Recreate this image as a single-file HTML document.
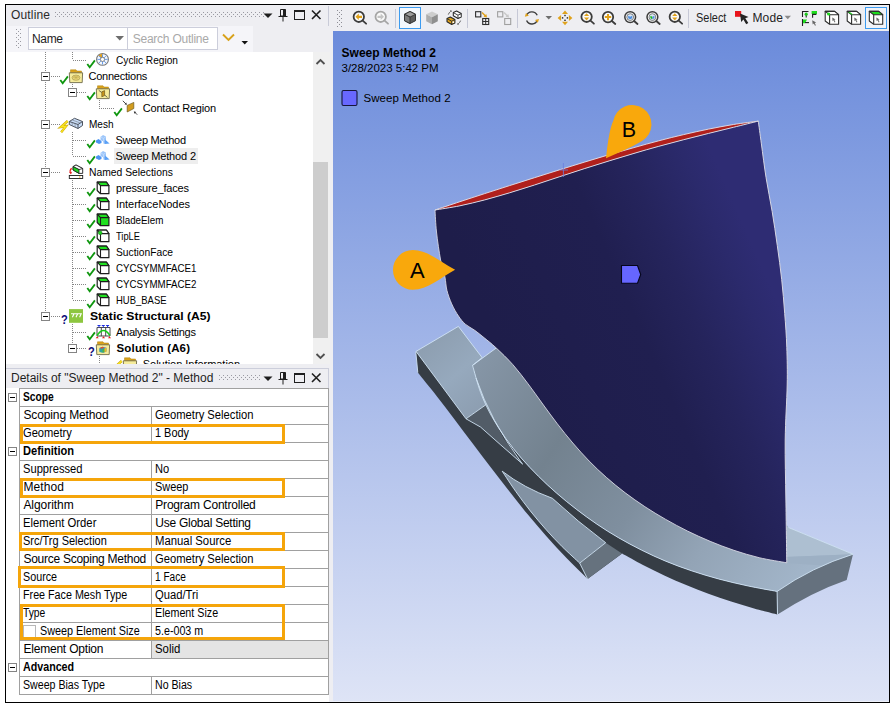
<!DOCTYPE html>
<html><head><meta charset="utf-8"><title>Mechanical</title>
<style>
html,body{margin:0;padding:0;background:#fff;}
body{width:895px;height:708px;position:relative;overflow:hidden;font-family:"Liberation Sans",sans-serif;}
.a{position:absolute;}
.t{position:absolute;white-space:nowrap;font-family:"Liberation Sans",sans-serif;}
svg{position:absolute;overflow:visible;}
</style></head><body>

<div class="a" style="left:5px;top:4px;width:885px;height:699px;background:#000;"></div>
<div class="a" style="left:6px;top:5px;width:883px;height:697px;background:#EEEEF2;"></div>
<span class="t" style="left:11.0px;top:7.0px;line-height:16px;font-size:12px;color:#2A2A2A;letter-spacing:0.163px;">Outline</span>
<div class="a" style="left:55px;top:12px;width:209px;height:5px;background-image:radial-gradient(circle at 0.5px 0.5px,#9a9aa2 0.6px,transparent 0.7px),radial-gradient(circle at 0.5px 0.5px,#9a9aa2 0.6px,transparent 0.7px);background-size:4px 4px,4px 4px;background-position:0 0,2px 2px;"></div>
<svg style="left:262px;top:7px" width="12" height="16"><path d="M1.5 6.5 L10.5 6.5 L6 11 Z" fill="#1E1E1E"/></svg><svg style="left:277px;top:7px" width="12" height="16"><path d="M3.5 2.5h5v6.5h-5z M6.5 2.5v6.5" fill="none" stroke="#1E1E1E" stroke-width="1"/><path d="M7 2.5h1.5v6.5h-1.5z" fill="#1E1E1E"/><path d="M1.5 9.5h9" stroke="#1E1E1E" stroke-width="1"/><path d="M6 9.5v5" stroke="#1E1E1E" stroke-width="1"/></svg><svg style="left:293px;top:7px" width="14" height="16"><rect x="1.5" y="3.5" width="10" height="9" fill="none" stroke="#1E1E1E" stroke-width="1"/><rect x="1" y="3" width="11" height="2" fill="#1E1E1E"/></svg><svg style="left:310px;top:7px" width="14" height="16"><path d="M2 3.5 L10.5 12 M10.5 3.5 L2 12" stroke="#1E1E1E" stroke-width="1.6" fill="none"/></svg>
<div class="a" style="left:328px;top:6px;width:1px;height:20px;background:#C9CBD8;"></div>
<div class="a" style="left:6px;top:26px;width:247px;height:26px;background:#F5F5F9;"></div>
<div class="a" style="left:16px;top:29px;width:5px;height:19px;background-image:radial-gradient(circle at 0.5px 0.5px,#9a9aa2 0.6px,transparent 0.7px),radial-gradient(circle at 0.5px 0.5px,#9a9aa2 0.6px,transparent 0.7px);background-size:4px 4px,4px 4px;background-position:0 0,2px 2px;"></div>
<div class="a" style="left:28px;top:27px;width:98px;height:21px;background:#fff;border:1px solid #CCCEDB;"></div>
<span class="t" style="left:32.0px;top:30.5px;line-height:16px;font-size:12px;color:#1E1E1E;letter-spacing:-0.337px;">Name</span>
<svg style="left:115px;top:34px" width="10" height="8"><path d="M0.5 2 L9 2 L4.75 6.5 Z" fill="#6d6d6d"/></svg>
<div class="a" style="left:127px;top:27px;width:89px;height:21px;background:#fff;border:1px solid #CCCEDB;"></div>
<span class="t" style="left:132.7px;top:30.5px;line-height:16px;font-size:12px;color:#A9A9A9;letter-spacing:-0.237px;">Search Outline</span>
<svg style="left:222px;top:32px" width="14" height="12"><path d="M1 2.5 L6.5 8 L12 2.5" stroke="#D8A21B" stroke-width="1.9" fill="none"/></svg>
<svg style="left:241px;top:40px" width="8" height="6"><path d="M0.5 1 L7 1 L3.75 4.5 Z" fill="#111"/></svg>
<div class="a" style="left:6px;top:52px;width:307px;height:312px;background:#fff;overflow:hidden;" id="tree">
<div class="a" style="left:39px;top:0px;width:1px;height:264px;background-image:linear-gradient(#858585 50%,transparent 50%);background-size:1px 2px;background-position:0 0px;"></div>
<div class="a" style="left:66px;top:0px;width:1px;height:8px;background-image:linear-gradient(#858585 50%,transparent 50%);background-size:1px 2px;background-position:0 0px;"></div>
<div class="a" style="left:66px;top:32px;width:1px;height:4px;background-image:linear-gradient(#858585 50%,transparent 50%);background-size:1px 2px;background-position:0 0px;"></div>
<div class="a" style="left:93px;top:48px;width:1px;height:8px;background-image:linear-gradient(#858585 50%,transparent 50%);background-size:1px 2px;background-position:0 0px;"></div>
<div class="a" style="left:66px;top:80px;width:1px;height:24px;background-image:linear-gradient(#858585 50%,transparent 50%);background-size:1px 2px;background-position:0 0px;"></div>
<div class="a" style="left:66px;top:128px;width:1px;height:120px;background-image:linear-gradient(#858585 50%,transparent 50%);background-size:1px 2px;background-position:0 0px;"></div>
<div class="a" style="left:66px;top:272px;width:1px;height:20px;background-image:linear-gradient(#858585 50%,transparent 50%);background-size:1px 2px;background-position:0 0px;"></div>
<div class="a" style="left:93px;top:304px;width:1px;height:10px;background-image:linear-gradient(#858585 50%,transparent 50%);background-size:1px 2px;background-position:0 0px;"></div>
<div class="a" style="left:66px;top:8px;width:15px;height:1px;background-image:linear-gradient(90deg,#858585 50%,transparent 50%);background-size:2px 1px;background-position:1px 0;"></div>
<svg style="left:81px;top:8px" width="9" height="9" viewBox="0 0 9 9"><path d="M0.3 3.9 L2.7 7.3 L7.9 0.4" stroke="#0E960E" stroke-width="1.8" fill="none"/></svg>
<svg style="left:89px;top:0px" width="16" height="16" viewBox="0 0 16 16"><circle cx="7.5" cy="7.4" r="5.9" fill="#F4F8FE" stroke="#777" stroke-width="1.1"/><path d="M7.5 7.4 L3.4 3.6 A5.6 5.6 0 0 1 7.5 1.8 Z" fill="#E0A020"/><path d="M7.5 2.3V12.5M2.4 7.4H12.6M3.9 3.8L11.1 11M11.1 3.8L3.9 11" stroke="#5B93E6" stroke-width="0.9"/><circle cx="7.5" cy="7.4" r="2.1" fill="#fff" stroke="#777" stroke-width="0.9"/></svg>
<div class="a" style="left:-6px;top:-52px;"><span class="t" style="left:116.0px;top:52.0px;line-height:16px;font-size:11px;color:#000;transform:scaleX(0.9220);transform-origin:0 50%;">Cyclic Region</span></div>
<div class="a" style="left:44px;top:24px;width:10px;height:1px;background-image:linear-gradient(90deg,#858585 50%,transparent 50%);background-size:2px 1px;background-position:1px 0;"></div>
<div class="a" style="left:35px;top:20px;width:7px;height:7px;border:1px solid #848484;background:#fff;"></div><div class="a" style="left:37px;top:24px;width:5px;height:1px;background:#000;"></div>
<svg style="left:54px;top:24px" width="9" height="9" viewBox="0 0 9 9"><path d="M0.3 3.9 L2.7 7.3 L7.9 0.4" stroke="#0E960E" stroke-width="1.8" fill="none"/></svg>
<svg style="left:62px;top:16px" width="16" height="16" viewBox="0 0 16 16"><path d="M2.5 1.8 H8 L9 3 H13.5 V5.5 H2.5 Z" fill="#D9A21B" stroke="#B0820E" stroke-width="0.5"/><path d="M1.3 4.8 H14.6 L14.2 14.6 H1.8 Z" fill="#F6EC9C" stroke="#6E6A4A" stroke-width="0.9" stroke-linejoin="round"/><ellipse cx="8" cy="9.7" rx="4" ry="2.6" fill="#EAD778" stroke="#A89A50" stroke-width="0.7"/><path d="M5 9.2h6M6.5 8l3 3.2M9.5 8l-3 3.2" stroke="#B8A24A" stroke-width="0.6"/></svg>
<div class="a" style="left:-6px;top:-52px;"><span class="t" style="left:88.5px;top:68.0px;line-height:16px;font-size:11px;color:#000;letter-spacing:-0.235px;">Connections</span></div>
<div class="a" style="left:71px;top:40px;width:10px;height:1px;background-image:linear-gradient(90deg,#858585 50%,transparent 50%);background-size:2px 1px;background-position:0px 0;"></div>
<div class="a" style="left:62px;top:36px;width:7px;height:7px;border:1px solid #848484;background:#fff;"></div><div class="a" style="left:64px;top:40px;width:5px;height:1px;background:#000;"></div>
<svg style="left:81px;top:40px" width="9" height="9" viewBox="0 0 9 9"><path d="M0.3 3.9 L2.7 7.3 L7.9 0.4" stroke="#0E960E" stroke-width="1.8" fill="none"/></svg>
<svg style="left:89px;top:32px" width="16" height="16" viewBox="0 0 16 16"><path d="M2.5 1.8 H8 L9 3 H13.5 V5.5 H2.5 Z" fill="#D9A21B" stroke="#B0820E" stroke-width="0.5"/><path d="M1.3 4.8 H14.6 L14.2 14.6 H1.8 Z" fill="#F6EC9C" stroke="#6E6A4A" stroke-width="0.9" stroke-linejoin="round"/><path d="M6.8 7.8 L9.6 6.6 L9.6 11.6 L6.8 12.8 Z" fill="#C9961C" stroke="#5a4a18" stroke-width="0.6"/><path d="M3.8 6.4 L6.6 8.4 M12.4 13.4 L9.8 11.2" stroke="#4a4a3a" stroke-width="0.8"/></svg>
<div class="a" style="left:-6px;top:-52px;"><span class="t" style="left:116.0px;top:84.0px;line-height:16px;font-size:11px;color:#000;letter-spacing:-0.130px;">Contacts</span></div>
<div class="a" style="left:93px;top:56px;width:15px;height:1px;background-image:linear-gradient(90deg,#858585 50%,transparent 50%);background-size:2px 1px;background-position:0px 0;"></div>
<svg style="left:108px;top:56px" width="9" height="9" viewBox="0 0 9 9"><path d="M0.3 3.9 L2.7 7.3 L7.9 0.4" stroke="#0E960E" stroke-width="1.8" fill="none"/></svg>
<svg style="left:116px;top:48px" width="16" height="16" viewBox="0 0 16 16"><path d="M5.200 5.400 L11.800 2.400 L11.800 8.500 L5.200 12 Z" fill="#D29C1E" stroke="#6E5A1E" stroke-width="0.700"/><path d="M0.800 0.800 L4 4" stroke="#333" stroke-width="0.900"/><path d="M4.900 4.900 L2.500 4.300 L4.300 2.500 Z" fill="#333"/><path d="M15.200 14.700 L12.600 12.100" stroke="#333" stroke-width="0.900"/><path d="M11.800 11.300 L14.200 11.900 L12.400 13.700 Z" fill="#333"/></svg>
<div class="a" style="left:-6px;top:-52px;"><span class="t" style="left:142.8px;top:100.0px;line-height:16px;font-size:11px;color:#000;letter-spacing:-0.202px;">Contact Region</span></div>
<div class="a" style="left:44px;top:72px;width:10px;height:1px;background-image:linear-gradient(90deg,#858585 50%,transparent 50%);background-size:2px 1px;background-position:1px 0;"></div>
<div class="a" style="left:35px;top:68px;width:7px;height:7px;border:1px solid #848484;background:#fff;"></div><div class="a" style="left:37px;top:72px;width:5px;height:1px;background:#000;"></div>
<svg style="left:53px;top:68px" width="10" height="14" viewBox="0 0 10 14"><path d="M8.7 1 L2 7 L7 6.2 L2.2 12.2" stroke="#C9A50C" stroke-width="2.4" fill="none" stroke-linejoin="miter"/><path d="M8.7 1 L2 7 L7 6.2 L2.2 12.2" stroke="#FAE51E" stroke-width="1.4" fill="none"/></svg>
<svg style="left:62px;top:64px" width="16" height="16" viewBox="0 0 16 16"><path d="M1.300 5.500 L6.500 2.300 L14.500 5.500 L14.500 9.500 L10 12.500 L1.300 8.500 Z" fill="#C9DDF7" stroke="#4E5560" stroke-width="1" stroke-linejoin="round"/><path d="M1.300 5.500 L10 8.500 L14.500 5.500 M10 8.500 V12.500" stroke="#4E5560" stroke-width="1" fill="none"/><path d="M4.200 6.500 V9.800 M7.100 7.500 V11.200 M4 3.900 L12.300 7" stroke="#7D8794" stroke-width="0.700" fill="none"/></svg>
<div class="a" style="left:-6px;top:-52px;"><span class="t" style="left:88.5px;top:116.0px;line-height:16px;font-size:11px;color:#000;transform:scaleX(0.9108);transform-origin:0 50%;">Mesh</span></div>
<div class="a" style="left:66px;top:88px;width:15px;height:1px;background-image:linear-gradient(90deg,#858585 50%,transparent 50%);background-size:2px 1px;background-position:1px 0;"></div>
<svg style="left:81px;top:88px" width="9" height="9" viewBox="0 0 9 9"><path d="M0.3 3.9 L2.7 7.3 L7.9 0.4" stroke="#0E960E" stroke-width="1.8" fill="none"/></svg>
<svg style="left:89px;top:80px" width="16" height="16" viewBox="0 0 16 16"><path d="M5.500 5 L8 3 L11 4.500 L11 8 L8.500 9.500 L5.500 8 Z" fill="#9DC6FA"/><path d="M5.500 5 L8.500 6.400 L11 4.500 M8.500 6.400 V9.500" stroke="#C9E0FC" stroke-width="0.700" fill="none"/><path d="M1 8.500 L3.500 7 L6.500 9 L6.500 11 L4 12 L1 10.500 Z" fill="#4C94F2"/><path d="M10 7.500 L14.600 11.500 L10 12 Z" fill="#5BA1F6"/><path d="M8.500 9.500 L10 8 L10 12 L8.500 11.500 Z" fill="#86B8F8"/></svg>
<div class="a" style="left:-6px;top:-52px;"><span class="t" style="left:115.5px;top:132.0px;line-height:16px;font-size:11px;color:#000;letter-spacing:-0.262px;">Sweep Method</span></div>
<div class="a" style="left:66px;top:104px;width:15px;height:1px;background-image:linear-gradient(90deg,#858585 50%,transparent 50%);background-size:2px 1px;background-position:1px 0;"></div>
<svg style="left:81px;top:104px" width="9" height="9" viewBox="0 0 9 9"><path d="M0.3 3.9 L2.7 7.3 L7.9 0.4" stroke="#0E960E" stroke-width="1.8" fill="none"/></svg>
<svg style="left:89px;top:96px" width="16" height="16" viewBox="0 0 16 16"><path d="M5.500 5 L8 3 L11 4.500 L11 8 L8.500 9.500 L5.500 8 Z" fill="#9DC6FA"/><path d="M5.500 5 L8.500 6.400 L11 4.500 M8.500 6.400 V9.500" stroke="#C9E0FC" stroke-width="0.700" fill="none"/><path d="M1 8.500 L3.500 7 L6.500 9 L6.500 11 L4 12 L1 10.500 Z" fill="#4C94F2"/><path d="M10 7.500 L14.600 11.500 L10 12 Z" fill="#5BA1F6"/><path d="M8.500 9.500 L10 8 L10 12 L8.500 11.500 Z" fill="#86B8F8"/></svg>
<div class="a" style="left:108px;top:96px;width:84px;height:16px;background:#EEEEEE;"></div>
<div class="a" style="left:-6px;top:-52px;"><span class="t" style="left:115.5px;top:148.0px;line-height:16px;font-size:11px;color:#000;letter-spacing:-0.158px;">Sweep Method 2</span></div>
<div class="a" style="left:44px;top:120px;width:10px;height:1px;background-image:linear-gradient(90deg,#858585 50%,transparent 50%);background-size:2px 1px;background-position:1px 0;"></div>
<div class="a" style="left:35px;top:116px;width:7px;height:7px;border:1px solid #848484;background:#fff;"></div><div class="a" style="left:37px;top:120px;width:5px;height:1px;background:#000;"></div>
<svg style="left:62px;top:112px" width="16" height="16" viewBox="0 0 16 16"><path d="M5.100 2.600 L8 1 L14.700 4.500 V9.400 H11 L5.100 6 Z" fill="#fff" stroke="#1E1E1E" stroke-width="0.900" stroke-linejoin="round"/><path d="M5.100 2.600 L8 1 L14.700 4.500 L11 5.600 Z" fill="#fff" stroke="#1E1E1E" stroke-width="0.800"/><path d="M5.100 2.600 L11 5.600 V9.400 L5.100 6 Z" fill="#1FD21F" stroke="#1E1E1E" stroke-width="0.800"/><path d="M3.600 4.200 Q1.200 6.500 2.600 9.200" stroke="#E62020" stroke-width="1.200" fill="none"/><path d="M1.200 8.200 L3 10.400 L4 7.800 Z" fill="#E62020"/><rect x="1.300" y="11.500" width="13.400" height="3" fill="#fff" stroke="#1E1E1E" stroke-width="0.900"/><rect x="11" y="12.500" width="1.500" height="1" fill="#E8A317"/></svg>
<div class="a" style="left:-6px;top:-52px;"><span class="t" style="left:88.5px;top:164.0px;line-height:16px;font-size:11px;color:#000;transform:scaleX(0.9388);transform-origin:0 50%;">Named Selections</span></div>
<div class="a" style="left:66px;top:136px;width:15px;height:1px;background-image:linear-gradient(90deg,#858585 50%,transparent 50%);background-size:2px 1px;background-position:1px 0;"></div>
<svg style="left:81px;top:136px" width="9" height="9" viewBox="0 0 9 9"><path d="M0.3 3.9 L2.7 7.3 L7.9 0.4" stroke="#0E960E" stroke-width="1.8" fill="none"/></svg>
<svg style="left:89px;top:128px" width="16" height="16" viewBox="0 0 16 16"><path d="M2.200 2.100 H11.400 L13.900 5.600 V13.700 H5.500 L2.200 10.500 Z" fill="#fff" stroke="#1E1E1E" stroke-width="1.200" stroke-linejoin="round"/><path d="M2.200 2.100 H11.400 L13.900 5.600 H5.500 Z" fill="#1FE01F" stroke="#1E1E1E" stroke-width="1.100" stroke-linejoin="round"/><path d="M5.500 5.600 V13.700" stroke="#1E1E1E" stroke-width="1.100"/></svg>
<div class="a" style="left:-6px;top:-52px;"><span class="t" style="left:116.0px;top:180.0px;line-height:16px;font-size:11px;color:#000;letter-spacing:-0.170px;">pressure_faces</span></div>
<div class="a" style="left:66px;top:152px;width:15px;height:1px;background-image:linear-gradient(90deg,#858585 50%,transparent 50%);background-size:2px 1px;background-position:1px 0;"></div>
<svg style="left:81px;top:152px" width="9" height="9" viewBox="0 0 9 9"><path d="M0.3 3.9 L2.7 7.3 L7.9 0.4" stroke="#0E960E" stroke-width="1.8" fill="none"/></svg>
<svg style="left:89px;top:144px" width="16" height="16" viewBox="0 0 16 16"><path d="M2.200 2.100 H11.400 L13.900 5.600 V13.700 H5.500 L2.200 10.500 Z" fill="#fff" stroke="#1E1E1E" stroke-width="1.200" stroke-linejoin="round"/><path d="M2.200 2.100 H11.400 L13.900 5.600 H5.500 Z" fill="#1FE01F" stroke="#1E1E1E" stroke-width="1.100" stroke-linejoin="round"/><path d="M5.500 5.600 V13.700" stroke="#1E1E1E" stroke-width="1.100"/></svg>
<div class="a" style="left:-6px;top:-52px;"><span class="t" style="left:116.0px;top:196.0px;line-height:16px;font-size:11px;color:#000;letter-spacing:-0.046px;">InterfaceNodes</span></div>
<div class="a" style="left:66px;top:168px;width:15px;height:1px;background-image:linear-gradient(90deg,#858585 50%,transparent 50%);background-size:2px 1px;background-position:1px 0;"></div>
<svg style="left:81px;top:168px" width="9" height="9" viewBox="0 0 9 9"><path d="M0.3 3.9 L2.7 7.3 L7.9 0.4" stroke="#0E960E" stroke-width="1.8" fill="none"/></svg>
<svg style="left:89px;top:160px" width="16" height="16" viewBox="0 0 16 16"><path d="M2.200 2.100 H11.400 L13.900 5.600 V13.700 H5.500 L2.200 10.500 Z" fill="#1FE01F" stroke="#1E1E1E" stroke-width="1.200" stroke-linejoin="round"/><path d="M2.200 2.100 H11.400 L13.900 5.600 H5.500 Z" fill="#1FE01F" stroke="#1E1E1E" stroke-width="1.100" stroke-linejoin="round"/><path d="M5.500 5.600 V13.700" stroke="#1E1E1E" stroke-width="1.100"/></svg>
<div class="a" style="left:-6px;top:-52px;"><span class="t" style="left:116.0px;top:212.0px;line-height:16px;font-size:11px;color:#000;transform:scaleX(0.8911);transform-origin:0 50%;">BladeElem</span></div>
<div class="a" style="left:66px;top:184px;width:15px;height:1px;background-image:linear-gradient(90deg,#858585 50%,transparent 50%);background-size:2px 1px;background-position:1px 0;"></div>
<svg style="left:81px;top:184px" width="9" height="9" viewBox="0 0 9 9"><path d="M0.3 3.9 L2.7 7.3 L7.9 0.4" stroke="#0E960E" stroke-width="1.8" fill="none"/></svg>
<svg style="left:89px;top:176px" width="16" height="16" viewBox="0 0 16 16"><path d="M2.200 2.100 H11.400 L13.900 5.600 V13.700 H5.500 L2.200 10.500 Z" fill="#fff" stroke="#1E1E1E" stroke-width="1.200" stroke-linejoin="round"/><path d="M2.200 2.100 H11.400 L13.900 5.600 H5.500 Z" fill="#fff" stroke="#1E1E1E" stroke-width="1.100" stroke-linejoin="round"/><path d="M5.500 5.600 V13.700" stroke="#1E1E1E" stroke-width="1.100"/><circle cx="5.200" cy="4.800" r="1.900" fill="#1FD21F" stroke="#127a12" stroke-width="0.500"/></svg>
<div class="a" style="left:-6px;top:-52px;"><span class="t" style="left:116.0px;top:228.0px;line-height:16px;font-size:11px;color:#000;transform:scaleX(0.8472);transform-origin:0 50%;">TipLE</span></div>
<div class="a" style="left:66px;top:200px;width:15px;height:1px;background-image:linear-gradient(90deg,#858585 50%,transparent 50%);background-size:2px 1px;background-position:1px 0;"></div>
<svg style="left:81px;top:200px" width="9" height="9" viewBox="0 0 9 9"><path d="M0.3 3.9 L2.7 7.3 L7.9 0.4" stroke="#0E960E" stroke-width="1.8" fill="none"/></svg>
<svg style="left:89px;top:192px" width="16" height="16" viewBox="0 0 16 16"><path d="M2.200 2.100 H11.400 L13.900 5.600 V13.700 H5.500 L2.200 10.500 Z" fill="#fff" stroke="#1E1E1E" stroke-width="1.200" stroke-linejoin="round"/><path d="M2.200 2.100 H11.400 L13.900 5.600 H5.500 Z" fill="#1FE01F" stroke="#1E1E1E" stroke-width="1.100" stroke-linejoin="round"/><path d="M5.500 5.600 V13.700" stroke="#1E1E1E" stroke-width="1.100"/></svg>
<div class="a" style="left:-6px;top:-52px;"><span class="t" style="left:116.0px;top:244.0px;line-height:16px;font-size:11px;color:#000;transform:scaleX(0.9322);transform-origin:0 50%;">SuctionFace</span></div>
<div class="a" style="left:66px;top:216px;width:15px;height:1px;background-image:linear-gradient(90deg,#858585 50%,transparent 50%);background-size:2px 1px;background-position:1px 0;"></div>
<svg style="left:81px;top:216px" width="9" height="9" viewBox="0 0 9 9"><path d="M0.3 3.9 L2.7 7.3 L7.9 0.4" stroke="#0E960E" stroke-width="1.8" fill="none"/></svg>
<svg style="left:89px;top:208px" width="16" height="16" viewBox="0 0 16 16"><path d="M2.200 2.100 H11.400 L13.900 5.600 V13.700 H5.500 L2.200 10.500 Z" fill="#fff" stroke="#1E1E1E" stroke-width="1.200" stroke-linejoin="round"/><path d="M2.200 2.100 H11.400 L13.900 5.600 H5.500 Z" fill="#1FE01F" stroke="#1E1E1E" stroke-width="1.100" stroke-linejoin="round"/><path d="M5.500 5.600 V13.700" stroke="#1E1E1E" stroke-width="1.100"/></svg>
<div class="a" style="left:-6px;top:-52px;"><span class="t" style="left:115.5px;top:260.0px;line-height:16px;font-size:11px;color:#000;transform:scaleX(0.8839);transform-origin:0 50%;">CYCSYMMFACE1</span></div>
<div class="a" style="left:66px;top:232px;width:15px;height:1px;background-image:linear-gradient(90deg,#858585 50%,transparent 50%);background-size:2px 1px;background-position:1px 0;"></div>
<svg style="left:81px;top:232px" width="9" height="9" viewBox="0 0 9 9"><path d="M0.3 3.9 L2.7 7.3 L7.9 0.4" stroke="#0E960E" stroke-width="1.8" fill="none"/></svg>
<svg style="left:89px;top:224px" width="16" height="16" viewBox="0 0 16 16"><path d="M2.200 2.100 H11.400 L13.900 5.600 V13.700 H5.500 L2.200 10.500 Z" fill="#fff" stroke="#1E1E1E" stroke-width="1.200" stroke-linejoin="round"/><path d="M2.200 2.100 H11.400 L13.900 5.600 H5.500 Z" fill="#1FE01F" stroke="#1E1E1E" stroke-width="1.100" stroke-linejoin="round"/><path d="M5.500 5.600 V13.700" stroke="#1E1E1E" stroke-width="1.100"/></svg>
<div class="a" style="left:-6px;top:-52px;"><span class="t" style="left:115.5px;top:276.0px;line-height:16px;font-size:11px;color:#000;transform:scaleX(0.8839);transform-origin:0 50%;">CYCSYMMFACE2</span></div>
<div class="a" style="left:66px;top:248px;width:15px;height:1px;background-image:linear-gradient(90deg,#858585 50%,transparent 50%);background-size:2px 1px;background-position:1px 0;"></div>
<svg style="left:81px;top:248px" width="9" height="9" viewBox="0 0 9 9"><path d="M0.3 3.9 L2.7 7.3 L7.9 0.4" stroke="#0E960E" stroke-width="1.8" fill="none"/></svg>
<svg style="left:89px;top:240px" width="16" height="16" viewBox="0 0 16 16"><path d="M2.200 2.100 H11.400 L13.900 5.600 V13.700 H5.500 L2.200 10.500 Z" fill="#fff" stroke="#1E1E1E" stroke-width="1.200" stroke-linejoin="round"/><path d="M2.200 2.100 H11.400 L13.900 5.600 H5.500 Z" fill="#1FE01F" stroke="#1E1E1E" stroke-width="1.100" stroke-linejoin="round"/><path d="M5.500 5.600 V13.700" stroke="#1E1E1E" stroke-width="1.100"/></svg>
<div class="a" style="left:-6px;top:-52px;"><span class="t" style="left:115.5px;top:292.0px;line-height:16px;font-size:11px;color:#000;transform:scaleX(0.8605);transform-origin:0 50%;">HUB_BASE</span></div>
<div class="a" style="left:44px;top:264px;width:10px;height:1px;background-image:linear-gradient(90deg,#858585 50%,transparent 50%);background-size:2px 1px;background-position:1px 0;"></div>
<div class="a" style="left:35px;top:260px;width:7px;height:7px;border:1px solid #848484;background:#fff;"></div><div class="a" style="left:37px;top:264px;width:5px;height:1px;background:#000;"></div>
<span class="t" style="left:55px;top:261px;font-size:13px;line-height:14px;font-weight:bold;color:#0A0A78;transform:scaleX(0.85);transform-origin:0 0;">?</span>
<svg style="left:62px;top:256px" width="16" height="16" viewBox="0 0 16 16"><rect x="1" y="1.100" width="14" height="13.700" fill="#8DC63F"/><path d="M3 5.800 h3 l-1.600 3.400 M6.600 5.800 h3 l-1.600 3.400 M10.200 5.800 h3 l-1.600 3.400" stroke="#fff" stroke-width="1.100" fill="none"/></svg>
<div class="a" style="left:-6px;top:-52px;"><span class="t" style="left:89.5px;top:308.0px;line-height:16px;font-size:11.5px;color:#000;transform:scaleX(1.0535);transform-origin:0 50%;font-weight:bold;">Static Structural (A5)</span></div>
<div class="a" style="left:66px;top:280px;width:15px;height:1px;background-image:linear-gradient(90deg,#858585 50%,transparent 50%);background-size:2px 1px;background-position:1px 0;"></div>
<svg style="left:81px;top:280px" width="9" height="9" viewBox="0 0 9 9"><path d="M0.3 3.9 L2.7 7.3 L7.9 0.4" stroke="#0E960E" stroke-width="1.8" fill="none"/></svg>
<svg style="left:89px;top:272px" width="16" height="16" viewBox="0 0 16 16"><path d="M2 3.500 H15 V12 H2 Z M6.300 3.500 V12 M10.700 3.500 V12" stroke="#4A4A4A" stroke-width="1" fill="none"/><path d="M2.500 1.500 h3 M4 1.500 v2 M6.800 1.500 h3 M8.300 1.500 v2 M11.100 1.500 h3 M12.600 1.500 v2" stroke="#2030E0" stroke-width="1" fill="none"/><path d="M2.200 12.300 l1.500 2 h-3 Z M8.500 12.300 l1.500 2 h-3 Z M14.500 12.300 l1.500 2 h-3 Z" fill="#E62020"/><path d="M2 11.500 Q8.500 1.500 15 11.500" stroke="#18C818" stroke-width="1.400" fill="none"/></svg>
<div class="a" style="left:-6px;top:-52px;"><span class="t" style="left:116.0px;top:324.0px;line-height:16px;font-size:11px;color:#000;letter-spacing:-0.235px;">Analysis Settings</span></div>
<div class="a" style="left:71px;top:296px;width:10px;height:1px;background-image:linear-gradient(90deg,#858585 50%,transparent 50%);background-size:2px 1px;background-position:0px 0;"></div>
<div class="a" style="left:62px;top:292px;width:7px;height:7px;border:1px solid #848484;background:#fff;"></div><div class="a" style="left:64px;top:296px;width:5px;height:1px;background:#000;"></div>
<span class="t" style="left:82px;top:293px;font-size:13px;line-height:14px;font-weight:bold;color:#0A0A78;transform:scaleX(0.85);transform-origin:0 0;">?</span>
<svg style="left:89px;top:288px" width="16" height="16" viewBox="0 0 16 16"><path d="M2.5 1.8 H8 L9 3 H13.5 V5.5 H2.5 Z" fill="#D9A21B" stroke="#B0820E" stroke-width="0.5"/><path d="M1.3 4.8 H14.6 L14.2 14.6 H1.8 Z" fill="#F6EC9C" stroke="#6E6A4A" stroke-width="0.9" stroke-linejoin="round"/><path d="M4.5 8 l3 -1.2 l4 1 l0 3.6 l-3 1.4 l-4 -1.2 Z" fill="#3E7FD8"/><path d="M4.5 8 l3 -1.2 l2 0.5 l-3 1.4 Z" fill="#E8541A"/><path d="M7.5 9.2 l0 3.6 l-3 -0.8 l0 -3.6 Z" fill="#2FA8A0"/><path d="M7.5 9.2 l2 -0.9 l0 3.6 l-2 0.9 Z" fill="#4DBB3A"/><path d="M9.5 8.300 l2 -0.500 l0 3.600 l-2 0.900 Z" fill="#F0C020"/></svg>
<div class="a" style="left:-6px;top:-52px;"><span class="t" style="left:116.5px;top:340.0px;line-height:16px;font-size:11.5px;color:#000;letter-spacing:0.163px;font-weight:bold;">Solution (A6)</span></div>
<div class="a" style="left:93px;top:312px;width:15px;height:1px;background-image:linear-gradient(90deg,#858585 50%,transparent 50%);background-size:2px 1px;background-position:0px 0;"></div>
<svg style="left:107px;top:308px" width="10" height="14" viewBox="0 0 10 14"><path d="M8.7 1 L2 7 L7 6.2 L2.2 12.2" stroke="#C9A50C" stroke-width="2.4" fill="none" stroke-linejoin="miter"/><path d="M8.7 1 L2 7 L7 6.2 L2.2 12.2" stroke="#FAE51E" stroke-width="1.4" fill="none"/></svg>
<svg style="left:116px;top:304px" width="16" height="16" viewBox="0 0 16 16"><path d="M2.5 1.8 H8 L9 3 H13.5 V5.5 H2.5 Z" fill="#D9A21B" stroke="#B0820E" stroke-width="0.5"/><path d="M1.3 4.8 H14.6 L14.2 14.6 H1.8 Z" fill="#F6EC9C" stroke="#6E6A4A" stroke-width="0.9" stroke-linejoin="round"/></svg>
<div class="a" style="left:-6px;top:-52px;"><span class="t" style="left:142.8px;top:356.0px;line-height:16px;font-size:11px;color:#000;letter-spacing:-0.033px;">Solution Information</span></div>
</div>
<div class="a" style="left:313px;top:52px;width:17px;height:312px;background:#F0F0F0;"></div>
<div class="a" style="left:313px;top:162px;width:15px;height:176px;background:#CDCDCD;"></div>
<svg style="left:315px;top:57px" width="12" height="9"><path d="M1.5 7 L5.5 3 L9.5 7" stroke="#505050" stroke-width="1.8" fill="none"/></svg>
<svg style="left:315px;top:352px" width="12" height="9"><path d="M1.5 2 L5.5 6 L9.5 2" stroke="#505050" stroke-width="1.8" fill="none"/></svg>
<div class="a" style="left:6px;top:368px;width:323px;height:1px;background:#CCCEDB;"></div>
<div class="a" style="left:328px;top:368px;width:1px;height:20px;background:#CCCEDB;"></div>
<span class="t" style="left:11.0px;top:370.0px;line-height:16px;font-size:12px;color:#1E1E1E;letter-spacing:-0.009px;">Details of "Sweep Method 2" - Method</span>
<div class="a" style="left:219px;top:375px;width:41px;height:5px;background-image:radial-gradient(circle at 0.5px 0.5px,#9a9aa2 0.6px,transparent 0.7px),radial-gradient(circle at 0.5px 0.5px,#9a9aa2 0.6px,transparent 0.7px);background-size:4px 4px,4px 4px;background-position:0 0,2px 2px;"></div>
<svg style="left:262px;top:370px" width="12" height="16"><path d="M1.5 6.5 L10.5 6.5 L6 11 Z" fill="#1E1E1E"/></svg><svg style="left:277px;top:370px" width="12" height="16"><path d="M3.5 2.5h5v6.5h-5z M6.5 2.5v6.5" fill="none" stroke="#1E1E1E" stroke-width="1"/><path d="M7 2.5h1.5v6.5h-1.5z" fill="#1E1E1E"/><path d="M1.5 9.5h9" stroke="#1E1E1E" stroke-width="1"/><path d="M6 9.5v5" stroke="#1E1E1E" stroke-width="1"/></svg><svg style="left:293px;top:370px" width="14" height="16"><rect x="1.5" y="3.5" width="10" height="9" fill="none" stroke="#1E1E1E" stroke-width="1"/><rect x="1" y="3" width="11" height="2" fill="#1E1E1E"/></svg><svg style="left:310px;top:370px" width="14" height="16"><path d="M2 3.5 L10.5 12 M10.5 3.5 L2 12" stroke="#1E1E1E" stroke-width="1.6" fill="none"/></svg>
<div class="a" style="left:6px;top:388px;width:323px;height:314px;background:#fff;"></div>
<div class="a" style="left:152px;top:641px;width:176px;height:17px;background:#E4E4E4;"></div>
<div class="a" style="left:19px;top:388px;width:310px;height:1px;background:#A0A0A0;"></div>
<div class="a" style="left:19px;top:406px;width:310px;height:1px;background:#A0A0A0;"></div>
<div class="a" style="left:19px;top:424px;width:310px;height:1px;background:#A0A0A0;"></div>
<div class="a" style="left:19px;top:442px;width:310px;height:1px;background:#A0A0A0;"></div>
<div class="a" style="left:19px;top:460px;width:310px;height:1px;background:#A0A0A0;"></div>
<div class="a" style="left:19px;top:478px;width:310px;height:1px;background:#A0A0A0;"></div>
<div class="a" style="left:19px;top:496px;width:310px;height:1px;background:#A0A0A0;"></div>
<div class="a" style="left:19px;top:514px;width:310px;height:1px;background:#A0A0A0;"></div>
<div class="a" style="left:19px;top:532px;width:310px;height:1px;background:#A0A0A0;"></div>
<div class="a" style="left:19px;top:550px;width:310px;height:1px;background:#A0A0A0;"></div>
<div class="a" style="left:19px;top:568px;width:310px;height:1px;background:#A0A0A0;"></div>
<div class="a" style="left:19px;top:586px;width:310px;height:1px;background:#A0A0A0;"></div>
<div class="a" style="left:19px;top:604px;width:310px;height:1px;background:#A0A0A0;"></div>
<div class="a" style="left:19px;top:622px;width:310px;height:1px;background:#A0A0A0;"></div>
<div class="a" style="left:19px;top:640px;width:310px;height:1px;background:#A0A0A0;"></div>
<div class="a" style="left:19px;top:658px;width:310px;height:1px;background:#A0A0A0;"></div>
<div class="a" style="left:19px;top:676px;width:310px;height:1px;background:#A0A0A0;"></div>
<div class="a" style="left:19px;top:694px;width:310px;height:1px;background:#A0A0A0;"></div>
<div class="a" style="left:19px;top:388px;width:1px;height:307px;background:#A0A0A0;"></div>
<div class="a" style="left:328px;top:388px;width:1px;height:307px;background:#A0A0A0;"></div>
<div class="a" style="left:8px;top:393px;width:7px;height:7px;border:1px solid #848484;background:#fff;"></div><div class="a" style="left:10px;top:397px;width:5px;height:1px;background:#000;"></div>
<span class="t" style="left:23.4px;top:389.2px;line-height:16px;font-size:12px;color:#000;transform:scaleX(0.8525);transform-origin:0 50%;font-weight:bold;">Scope</span>
<div class="a" style="left:151px;top:406px;width:1px;height:18px;background:#A0A0A0;"></div>
<span class="t" style="left:23.4px;top:407.2px;line-height:16px;font-size:12px;color:#000;letter-spacing:-0.117px;">Scoping Method</span>
<span class="t" style="left:155.3px;top:407.2px;line-height:16px;font-size:12px;color:#000;transform:scaleX(0.9347);transform-origin:0 50%;">Geometry Selection</span>
<div class="a" style="left:151px;top:424px;width:1px;height:18px;background:#A0A0A0;"></div>
<span class="t" style="left:23.4px;top:425.2px;line-height:16px;font-size:12px;color:#000;transform:scaleX(0.9282);transform-origin:0 50%;">Geometry</span>
<span class="t" style="left:155.3px;top:425.2px;line-height:16px;font-size:12px;color:#000;transform:scaleX(0.9101);transform-origin:0 50%;">1 Body</span>
<div class="a" style="left:8px;top:447px;width:7px;height:7px;border:1px solid #848484;background:#fff;"></div><div class="a" style="left:10px;top:451px;width:5px;height:1px;background:#000;"></div>
<span class="t" style="left:23.4px;top:443.2px;line-height:16px;font-size:12px;color:#000;transform:scaleX(0.9236);transform-origin:0 50%;font-weight:bold;">Definition</span>
<div class="a" style="left:151px;top:460px;width:1px;height:18px;background:#A0A0A0;"></div>
<span class="t" style="left:23.4px;top:461.2px;line-height:16px;font-size:12px;color:#000;transform:scaleX(0.9291);transform-origin:0 50%;">Suppressed</span>
<span class="t" style="left:155.3px;top:461.2px;line-height:16px;font-size:12px;color:#000;transform:scaleX(0.9257);transform-origin:0 50%;">No</span>
<div class="a" style="left:151px;top:478px;width:1px;height:18px;background:#A0A0A0;"></div>
<span class="t" style="left:23.4px;top:479.2px;line-height:16px;font-size:12px;color:#000;letter-spacing:0.095px;">Method</span>
<span class="t" style="left:155.3px;top:479.2px;line-height:16px;font-size:12px;color:#000;transform:scaleX(0.9103);transform-origin:0 50%;">Sweep</span>
<div class="a" style="left:151px;top:496px;width:1px;height:18px;background:#A0A0A0;"></div>
<span class="t" style="left:23.4px;top:497.2px;line-height:16px;font-size:12px;color:#000;letter-spacing:-0.048px;">Algorithm</span>
<span class="t" style="left:155.3px;top:497.2px;line-height:16px;font-size:12px;color:#000;letter-spacing:-0.209px;">Program Controlled</span>
<div class="a" style="left:151px;top:514px;width:1px;height:18px;background:#A0A0A0;"></div>
<span class="t" style="left:23.4px;top:515.2px;line-height:16px;font-size:12px;color:#000;transform:scaleX(0.9407);transform-origin:0 50%;">Element Order</span>
<span class="t" style="left:155.3px;top:515.2px;line-height:16px;font-size:12px;color:#000;letter-spacing:-0.256px;">Use Global Setting</span>
<div class="a" style="left:151px;top:532px;width:1px;height:18px;background:#A0A0A0;"></div>
<span class="t" style="left:23.4px;top:533.2px;line-height:16px;font-size:12px;color:#000;transform:scaleX(0.9150);transform-origin:0 50%;">Src/Trg Selection</span>
<span class="t" style="left:155.3px;top:533.2px;line-height:16px;font-size:12px;color:#000;transform:scaleX(0.9441);transform-origin:0 50%;">Manual Source</span>
<div class="a" style="left:151px;top:550px;width:1px;height:18px;background:#A0A0A0;"></div>
<span class="t" style="left:23.4px;top:551.2px;line-height:16px;font-size:12px;color:#000;letter-spacing:-0.259px;">Source Scoping Method</span>
<span class="t" style="left:155.3px;top:551.2px;line-height:16px;font-size:12px;color:#000;transform:scaleX(0.9347);transform-origin:0 50%;">Geometry Selection</span>
<div class="a" style="left:151px;top:568px;width:1px;height:18px;background:#A0A0A0;"></div>
<span class="t" style="left:23.4px;top:569.2px;line-height:16px;font-size:12px;color:#000;transform:scaleX(0.8969);transform-origin:0 50%;">Source</span>
<span class="t" style="left:155.3px;top:569.2px;line-height:16px;font-size:12px;color:#000;transform:scaleX(0.8423);transform-origin:0 50%;">1 Face</span>
<div class="a" style="left:151px;top:586px;width:1px;height:18px;background:#A0A0A0;"></div>
<span class="t" style="left:23.4px;top:587.2px;line-height:16px;font-size:12px;color:#000;transform:scaleX(0.8945);transform-origin:0 50%;">Free Face Mesh Type</span>
<span class="t" style="left:155.3px;top:587.2px;line-height:16px;font-size:12px;color:#000;transform:scaleX(0.9343);transform-origin:0 50%;">Quad/Tri</span>
<div class="a" style="left:151px;top:604px;width:1px;height:18px;background:#A0A0A0;"></div>
<span class="t" style="left:23.4px;top:605.2px;line-height:16px;font-size:12px;color:#000;transform:scaleX(0.8572);transform-origin:0 50%;">Type</span>
<span class="t" style="left:155.3px;top:605.2px;line-height:16px;font-size:12px;color:#000;transform:scaleX(0.8925);transform-origin:0 50%;">Element Size</span>
<div class="a" style="left:151px;top:622px;width:1px;height:18px;background:#A0A0A0;"></div>
<div class="a" style="left:23px;top:625px;width:11px;height:11px;border:1px solid #B8B8B8;background:#fff;"></div>
<span class="t" style="left:39.6px;top:623.2px;line-height:16px;font-size:12px;color:#000;transform:scaleX(0.9004);transform-origin:0 50%;">Sweep Element Size</span>
<span class="t" style="left:155.3px;top:623.2px;line-height:16px;font-size:12px;color:#000;transform:scaleX(0.8921);transform-origin:0 50%;">5.e-003 m</span>
<div class="a" style="left:151px;top:640px;width:1px;height:18px;background:#A0A0A0;"></div>
<span class="t" style="left:23.4px;top:641.2px;line-height:16px;font-size:12px;color:#000;letter-spacing:-0.201px;">Element Option</span>
<span class="t" style="left:155.3px;top:641.2px;line-height:16px;font-size:12px;color:#000;transform:scaleX(0.9481);transform-origin:0 50%;">Solid</span>
<div class="a" style="left:8px;top:663px;width:7px;height:7px;border:1px solid #848484;background:#fff;"></div><div class="a" style="left:10px;top:667px;width:5px;height:1px;background:#000;"></div>
<span class="t" style="left:23.4px;top:659.2px;line-height:16px;font-size:12px;color:#000;transform:scaleX(0.8910);transform-origin:0 50%;font-weight:bold;">Advanced</span>
<div class="a" style="left:151px;top:676px;width:1px;height:18px;background:#A0A0A0;"></div>
<span class="t" style="left:23.4px;top:677.2px;line-height:16px;font-size:12px;color:#000;transform:scaleX(0.8843);transform-origin:0 50%;">Sweep Bias Type</span>
<span class="t" style="left:155.3px;top:677.2px;line-height:16px;font-size:12px;color:#000;transform:scaleX(0.8830);transform-origin:0 50%;">No Bias</span>
<div class="a" style="left:20px;top:424px;width:259px;height:14px;border:3px solid #F5A50A;"></div>
<div class="a" style="left:20px;top:478px;width:259px;height:14px;border:3px solid #F5A50A;"></div>
<div class="a" style="left:19px;top:532px;width:260px;height:13px;border:3px solid #F5A50A;"></div>
<div class="a" style="left:18px;top:566px;width:261px;height:16px;border:3px solid #F5A50A;"></div>
<div class="a" style="left:20px;top:604px;width:259px;height:30px;border:3px solid #F5A50A;"></div>
<svg style="left:333px;top:5px" width="556" height="26" viewBox="333 5 556 26">
<rect x="337" y="10" width="1" height="1" fill="#8E8E96"/><rect x="341" y="10" width="1" height="1" fill="#8E8E96"/><rect x="339" y="12" width="1" height="1" fill="#8E8E96"/><rect x="337" y="14" width="1" height="1" fill="#8E8E96"/><rect x="341" y="14" width="1" height="1" fill="#8E8E96"/><rect x="339" y="16" width="1" height="1" fill="#8E8E96"/><rect x="337" y="18" width="1" height="1" fill="#8E8E96"/><rect x="341" y="18" width="1" height="1" fill="#8E8E96"/><rect x="339" y="20" width="1" height="1" fill="#8E8E96"/><rect x="337" y="22" width="1" height="1" fill="#8E8E96"/><rect x="341" y="22" width="1" height="1" fill="#8E8E96"/><rect x="339" y="24" width="1" height="1" fill="#8E8E96"/><rect x="337" y="26" width="1" height="1" fill="#8E8E96"/><rect x="341" y="26" width="1" height="1" fill="#8E8E96"/>
<circle cx="358.8" cy="16.8" r="5.2" fill="#FAFAFA" stroke="#3C3C3C" stroke-width="1.8"/><path d="M362.7,20.7 L366.1,23.700000000000003" stroke="#3C3C3C" stroke-width="1.8" stroke-linecap="round"/>
<path d="M355.5,16.8 L358.8,13.6 V15.7 H362 V17.9 H358.8 V20 Z" fill="#E0A21B"/>
<circle cx="380.7" cy="16.8" r="5.2" fill="#FAFAFA" stroke="#A6A6A6" stroke-width="1.8"/><path d="M384.59999999999997,20.7 L388.0,23.700000000000003" stroke="#A6A6A6" stroke-width="1.8" stroke-linecap="round"/>
<path d="M384,16.8 L380.7,13.6 V15.7 H377.5 V17.9 H380.7 V20 Z" fill="#C4C4C4"/>
<rect x="395" y="9" width="1" height="19" fill="#C6C8D6"/>
<rect x="399.5" y="7.5" width="21" height="21" fill="#F4F8FD" stroke="#3C9BF0" stroke-width="1"/>
<path d="M410,11.5 L415.5,14.3 V20.7 L410,23.5 L404.5,20.7 V14.3 Z" fill="#5C5C5C" stroke="#333" stroke-width="1" stroke-linejoin="round"/><path d="M410,11.5 L415.5,14.3 L410,17.1 L404.5,14.3 Z" fill="#9C9C9C" stroke="#333" stroke-width="0.9" stroke-linejoin="round"/><path d="M404.5,14.3 L410,17.1 V23.5 L404.5,20.7 Z" fill="#7C7C7C" stroke="#333" stroke-width="0.9" stroke-linejoin="round"/>
<path d="M432,11.5 L437.8,14.3 L432,17.2 L426.2,14.3 Z" fill="#CDCDCD"/><path d="M426.2,14.3 L432,17.2 V24.3 L426.2,21.3 Z" fill="#ADADAD"/><path d="M437.8,14.3 L432,17.2 V24.3 L437.8,21.3 Z" fill="#8F8F8F"/>
<path d="M453.3,12.6 L456.6,11 L461.2,13.6 V17 L458,18.4 L453.3,15.8 Z" fill="#fff" stroke="#2A2A2A" stroke-width="1.1" stroke-linejoin="round"/><path d="M453.3,12.6 L458,15.2 L461.2,13.6 M458,15.2 V18.4" fill="none" stroke="#2A2A2A" stroke-width="0.9"/><rect x="458.8" y="15.4" width="1.6" height="1.6" fill="#fff"/><path d="M447.0,18.6 L450.3,17 L454.9,19.6 V23 L451.7,24.4 L447.0,21.8 Z" fill="#E0A21B" stroke="#2A2A2A" stroke-width="1.1" stroke-linejoin="round"/><path d="M447.0,18.6 L451.7,21.2 L454.9,19.6 M451.7,21.2 V24.4" fill="none" stroke="#2A2A2A" stroke-width="0.9"/><rect x="452.5" y="21.4" width="1.6" height="1.6" fill="#fff"/>
<path d="M448.3,14.6 q0.6,-2 2.4,-3.2 M460.6,20.6 q-0.6,2 -2.4,3.2" fill="none" stroke="#555" stroke-width="0.9"/><path d="M450.2,10.6 l1.2,0.2 l-0.4,1.2 M458.7,24.6 l-1.200,-0.200 l0.400,-1.200" fill="none" stroke="#555" stroke-width="0.8"/>
<rect x="467" y="9" width="1" height="19" fill="#C6C8D6"/>
<rect x="475.6" y="11.7" width="5.2" height="5.2" fill="none" stroke="#2E2E2E" stroke-width="1.1"/><path d="M482,12.500 L486,16.500" stroke="#E0A21B" stroke-width="1.400"/><path d="M487,17.500 L483.600,16.800 L486.300,14.100 Z" fill="#E0A21B"/><rect x="482.7" y="18.5" width="6" height="6" fill="none" stroke="#2E2E2E" stroke-width="1.1"/><path d="M485.700,18.500 v6 M482.700,21.500 h6" stroke="#2E2E2E" stroke-width="1"/>
<rect x="497.6" y="11.7" width="5.2" height="5.2" fill="none" stroke="#A0A0A0" stroke-width="1.1"/><path d="M504,12.500 L508,16.500" stroke="#C8C8C8" stroke-width="1.400"/><path d="M509,17.500 L505.600,16.800 L508.300,14.100 Z" fill="#C8C8C8"/><rect x="504.7" y="18.500" width="6" height="6" fill="none" stroke="#A0A0A0" stroke-width="1.1"/>
<rect x="517" y="9" width="1" height="19" fill="#C6C8D6"/>
<path d="M526.400,15.800 A5.800,5.800 0 0 1 537.200,15.300" fill="none" stroke="#3C3C3C" stroke-width="1.400"/><path d="M537.400,20 A5.800,5.800 0 0 1 526.600,20.500" fill="none" stroke="#3C3C3C" stroke-width="1.400"/><path d="M524.800,16.800 L526,13 L528.800,15.800 Z" fill="#E0A21B"/><path d="M539,19 L537.800,22.800 L535,20 Z" fill="#E0A21B"/>
<path d="M545.500,16 H552 L548.750,19.500 Z" fill="#6E6E6E"/>
<path d="M565,10.500 L568,14 H562 Z M565,25.300 L568,21.800 H562 Z M557.600,17.900 L561.100,14.900 V20.900 Z M572.400,17.900 L568.900,14.900 V20.900 Z" fill="#E0A21B"/><rect x="564.300" y="14.800" width="1.400" height="1.400" fill="#222"/><rect x="564.300" y="19.600" width="1.400" height="1.400" fill="#222"/><rect x="561.900" y="17.200" width="1.400" height="1.400" fill="#222"/><rect x="566.700" y="17.200" width="1.400" height="1.400" fill="#222"/>
<circle cx="586.6" cy="16.8" r="5.2" fill="#FAFAFA" stroke="#3C3C3C" stroke-width="1.8"/><path d="M590.5,20.7 L593.9,23.700000000000003" stroke="#3C3C3C" stroke-width="1.8" stroke-linecap="round"/><path d="M586.6,13.200000000000001 L589.2,16.0 H584.0 Z M586.6,20.400000000000002 L589.2,17.6 H584.0 Z" fill="#E0A21B"/>
<circle cx="608" cy="17.1" r="5.2" fill="#FAFAFA" stroke="#3C3C3C" stroke-width="1.8"/><path d="M611.9,21.0 L615.3,24.0" stroke="#3C3C3C" stroke-width="1.8" stroke-linecap="round"/><path d="M608,13.900 V20.300 M604.800,17.100 H611.200" stroke="#E0A21B" stroke-width="2"/>
<circle cx="630.2" cy="17.1" r="5.4" fill="#FAFAFA" stroke="#3C3C3C" stroke-width="1.5"/><path d="M634.1,21.0 L637.5,24.0" stroke="#3C3C3C" stroke-width="1.8" stroke-linecap="round"/><circle cx="630.200" cy="17.100" r="3.400" fill="#DCE6F2" stroke="#555" stroke-width="0.700"/><path d="M628.200,15.800 l2,1 l2,-1 v2.400 l-2,1 l-2,-1 Z" fill="#4F8FE0"/>
<circle cx="652.4" cy="17.1" r="5.4" fill="#FAFAFA" stroke="#3C3C3C" stroke-width="1.5"/><path d="M656.3,21.0 L659.6999999999999,24.0" stroke="#3C3C3C" stroke-width="1.8" stroke-linecap="round"/><circle cx="652.400" cy="17.100" r="3.400" fill="#DCE6F2" stroke="#555" stroke-width="0.700"/><path d="M650.400,15.800 l2,1 v2.400 l-2,-1 Z" fill="#1DB81D"/><path d="M654.400,15.800 l-2,1 v2.400 l2,-1 Z" fill="#4F8FE0"/>
<circle cx="674.8" cy="16.8" r="5.2" fill="#FAFAFA" stroke="#3C3C3C" stroke-width="1.8"/><path d="M678.6999999999999,20.7 L682.0999999999999,23.700000000000003" stroke="#3C3C3C" stroke-width="1.8" stroke-linecap="round"/><path d="M674.8,13.200000000000001 L677.4,16.0 H672.1999999999999 Z M674.8,20.400000000000002 L677.4,17.6 H672.1999999999999 Z" fill="#E0A21B"/>
<rect x="688" y="9" width="1" height="19" fill="#C6C8D6"/>
<rect x="735" y="11" width="6.200" height="5.800" fill="#E8141C"/><path d="M740,13.500 L748.500,17 L745.300,18.300 L748.300,23 L746.200,24.200 L743.400,19.600 L741.200,22 Z" fill="#222"/>
<path d="M784.500,15.800 H791 L787.750,19.300 Z" fill="#8A8A8A"/>
<path d="M802.5,17 V11.5 H808.5" stroke="#222" stroke-width="1.1" fill="none"/><path d="M806.2,14.5 V17.5" stroke="#222" stroke-width="1.1"/><circle cx="806.2" cy="14.2" r="1.6" fill="#1DC81D"/><rect x="811.6" y="11" width="5.4" height="3" fill="#1DDC1D"/><path d="M812.6,17.8 V14.4 H816.4" stroke="#222" stroke-width="1.1" fill="none"/><path d="M802.5,19 V26" stroke="#222" stroke-width="1.1"/><path d="M803,19.6 H807 L805,23.200 H803 Z" fill="#1DDC1D"/><path d="M805,22.600 H809" stroke="#222" stroke-width="1.100"/><path d="M812.200,20.300 L816.200,22.600 L814.700,23 L815.900,25.300 L815,25.800 L813.800,23.600 L812.700,24.600 Z" fill="#666"/>
<path d="M825.2,11.4 H834.6 L838.6,14.7 V24.2 H829.6 L825.2,21.0 Z" fill="#fff" stroke="#2E2E2E" stroke-width="1.1" stroke-linejoin="round"/><path d="M825.2,11.4 H834.6 L838.6,14.7 H829.6 Z" fill="#fff" stroke="#2E2E2E" stroke-width="1.1" stroke-linejoin="round"/><path d="M829.6,14.7 V24.2" stroke="#2E2E2E" stroke-width="1.1"/><circle cx="828.6" cy="14.0" r="1.6" fill="#1DDC1D"/><path d="M832.2,17.5 L835.6,19.5 L834.3000000000001,19.799999999999997 L835.4,22.0 L834.6,22.4 L833.5,20.299999999999997 L832.6,21.2 Z" fill="#666"/>
<path d="M847.2,11.4 H856.6 L860.6,14.7 V24.2 H851.6 L847.2,21.0 Z" fill="#fff" stroke="#2E2E2E" stroke-width="1.1" stroke-linejoin="round"/><path d="M847.2,11.4 H856.6 L860.6,14.7 H851.6 Z" fill="#fff" stroke="#2E2E2E" stroke-width="1.1" stroke-linejoin="round"/><path d="M851.6,14.7 V24.2" stroke="#2E2E2E" stroke-width="1.1"/><path d="M848.0,12.0 L851.6,14.5 L853.1,14.5 L849.8000000000001,12.0 Z" fill="#1DDC1D"/><path d="M854.2,17.5 L857.6,19.5 L856.3000000000001,19.799999999999997 L857.4,22.0 L856.6,22.4 L855.5,20.299999999999997 L854.6,21.2 Z" fill="#666"/>
<rect x="865.5" y="7.5" width="21" height="21" fill="#F1F3F8" stroke="#3C9BF0" stroke-width="1"/>
<path d="M869.3,11.4 H878.6999999999999 L882.6999999999999,14.7 V24.2 H873.6999999999999 L869.3,21.0 Z" fill="#fff" stroke="#2E2E2E" stroke-width="1.1" stroke-linejoin="round"/><path d="M869.3,11.4 H878.6999999999999 L882.6999999999999,14.7 H873.6999999999999 Z" fill="#1DDC1D" stroke="#2E2E2E" stroke-width="1.1" stroke-linejoin="round"/><path d="M873.6999999999999,14.7 V24.2" stroke="#2E2E2E" stroke-width="1.1"/><path d="M876.3,17.5 L879.6999999999999,19.5 L878.4,19.799999999999997 L879.4999999999999,22.0 L878.6999999999999,22.4 L877.5999999999999,20.299999999999997 L876.6999999999999,21.2 Z" fill="#666"/>
</svg>
<span class="t" style="left:696.4px;top:9.5px;line-height:16px;font-size:12px;color:#1E1E1E;transform:scaleX(0.9115);transform-origin:0 50%;">Select</span>
<span class="t" style="left:752.5px;top:9.5px;line-height:16px;font-size:12px;color:#1E1E1E;letter-spacing:0.127px;">Mode</span>
<svg style="left:333px;top:31px" width="556" height="671" viewBox="333 31 556 671">
<defs>
<linearGradient id="bg" x1="0" y1="0" x2="0" y2="1"><stop offset="0" stop-color="#6B8BDB"/><stop offset="1" stop-color="#DEE4F6"/></linearGradient>
<linearGradient id="blade" gradientUnits="userSpaceOnUse" x1="540" y1="440" x2="790" y2="330"><stop offset="0" stop-color="#1E1D4A"/><stop offset="0.5" stop-color="#201F50"/><stop offset="0.7" stop-color="#25245C"/><stop offset="0.9" stop-color="#2B2A6C"/><stop offset="1" stop-color="#2E2C73"/></linearGradient>
<linearGradient id="ptop" gradientUnits="userSpaceOnUse" x1="470" y1="360" x2="800" y2="580"><stop offset="0" stop-color="#8797A8"/><stop offset="0.3" stop-color="#73828F"/><stop offset="0.55" stop-color="#7F8F9F"/><stop offset="0.75" stop-color="#93A4B6"/><stop offset="1" stop-color="#A2B5C9"/></linearGradient>
<linearGradient id="btop" gradientUnits="userSpaceOnUse" x1="420" y1="345" x2="480" y2="415"><stop offset="0" stop-color="#8D9EB0"/><stop offset="0.5" stop-color="#96A9BD"/><stop offset="1" stop-color="#8C9DB0"/></linearGradient>
</defs>
<rect x="333" y="31" width="556" height="671" fill="url(#bg)"/>
<path d="M415.8,351.9 L417.8,372.6 C420.9,376.5 430.3,388.0 436.4,395.8 C442.5,403.6 448.6,411.5 454.6,419.4 C460.6,427.3 466.5,435.3 472.5,443.2 C478.5,451.1 484.5,459.1 490.5,467.0 C496.5,474.9 502.6,482.8 508.7,490.6 C514.8,498.4 520.9,506.2 527.2,513.8 C533.5,521.4 539.9,528.9 546.4,536.3 C552.9,543.7 559.6,551.0 566.5,558.1 C573.4,565.2 584.0,575.4 587.5,578.9 L622.1,553.4 C625.6,555.3 636.0,561.3 643.0,565.0 C650.0,568.7 657.1,572.1 664.3,575.5 C671.5,578.9 678.9,582.1 686.2,585.1 C693.6,588.1 700.9,591.0 708.4,593.7 C715.9,596.4 723.5,599.0 731.1,601.4 C738.7,603.8 746.4,606.2 754.1,608.4 C761.8,610.6 773.6,613.6 777.5,614.6 L777.1,591.4 C772.1,590.5 757.0,587.9 747.3,585.8 C737.6,583.7 728.1,581.5 718.8,579.0 C709.5,576.5 700.4,573.8 691.6,570.8 C682.8,567.8 674.1,564.7 665.8,561.2 C657.4,557.8 649.4,554.0 641.5,550.1 C633.6,546.2 626.0,542.0 618.5,537.7 C611.0,533.4 603.8,528.9 596.8,524.1 C589.8,519.4 583.0,514.3 576.3,509.2 C569.6,504.1 563.1,498.8 556.8,493.3 C550.5,487.8 544.4,482.2 538.5,476.3 C532.6,470.4 526.8,464.4 521.3,458.1 C515.8,451.8 510.6,445.3 505.7,438.4 C500.8,431.5 496.1,424.3 491.9,416.7 C487.7,409.1 483.9,401.2 480.7,392.6 C477.5,384.1 473.9,369.9 472.5,365.4 Z" fill="#363D45"/>
<path d="M472.5,365.4 C473.9,369.9 477.5,384.1 480.7,392.6 C483.9,401.2 487.7,409.1 491.9,416.7 C496.1,424.3 500.8,431.5 505.7,438.4 C510.6,445.3 515.8,451.8 521.3,458.1 C526.8,464.4 532.6,470.4 538.5,476.3 C544.4,482.2 550.5,487.8 556.8,493.3 C563.1,498.8 569.6,504.1 576.3,509.2 C583.0,514.3 589.8,519.4 596.8,524.1 C603.8,528.9 611.0,533.4 618.5,537.7 C626.0,542.0 633.6,546.2 641.5,550.1 C649.4,554.0 657.4,557.8 665.8,561.2 C674.1,564.7 682.8,567.8 691.6,570.8 C700.4,573.8 709.5,576.5 718.8,579.0 C728.1,581.5 737.6,583.7 747.3,585.8 C757.0,587.9 772.1,590.5 777.1,591.4 L853.0,554.2 L788.5,527.5 L700.0,400.0 L496.2,348.0 Z" fill="url(#ptop)"/>
<path d="M787,527 L853,554.2 L786,557 Z" fill="#ADBFD1"/>
<path d="M786,557 L853,554.2 L830,566 L786,563 Z" fill="#9DB0C4"/>
<path d="M777,591.5 Q812,567 853,554.2 L846.7,580 Q812,592 777.5,614.6 Z" fill="#65717E"/>
<path d="M416,351.4 L458.4,326.4 L482.1,357.6 L472.5,365.4 L477.9,382.7 L486,404.7 L466,418.8 Z" fill="url(#btop)"/>
<path d="M466,418.8 L486,404.7 L504,439 L523,464.4 L500.8,445 L480.5,427 Z" fill="#525C67"/>
<path d="M502.2,471.2 Q524,488 552.4,498.3 Q578,522 605.7,542.7 L579.7,563.1 C576.8,560.4 567.9,552.3 562.2,546.7 C556.6,541.1 551.1,535.3 545.8,529.3 C540.5,523.3 535.3,517.2 530.3,510.9 C525.3,504.6 520.5,498.1 515.8,491.5 C511.1,484.9 504.5,474.6 502.2,471.2 Z" fill="#8292A3"/>
<path d="M579.7,563.1 L605.7,542.7 L622,553.6 L587.5,578.9 Z" fill="#66727E"/>
<path d="M472.5,365.4 C473.9,369.9 477.5,384.1 480.7,392.6 C483.9,401.2 487.7,409.1 491.9,416.7 C496.1,424.3 500.8,431.5 505.7,438.4 C510.6,445.3 515.8,451.8 521.3,458.1 C526.8,464.4 532.6,470.4 538.5,476.3 C544.4,482.2 550.5,487.8 556.8,493.3 C563.1,498.8 569.6,504.1 576.3,509.2 C583.0,514.3 589.8,519.4 596.8,524.1 C603.8,528.9 611.0,533.4 618.5,537.7 C626.0,542.0 633.6,546.2 641.5,550.1 C649.4,554.0 657.4,557.8 665.8,561.2 C674.1,564.7 682.8,567.8 691.6,570.8 C700.4,573.8 709.5,576.5 718.8,579.0 C728.1,581.5 737.6,583.7 747.3,585.8 C757.0,587.9 772.1,590.5 777.1,591.4 L777.5,614.6  M777,591.5 Q812,567 853,554.2 L788.5,527.5 M416,351.4 L458.4,326.4 L482.1,357.6 L472.5,365.4 M496.2,348 L472.5,365.4 M416,351.4 L466,418.8 L486,404.7 M466,418.8 L480.5,427 L500.8,445 L523,464.4 M476,378 Q490,420 522,463.5 M502.2,471.2 Q524,488 552.4,498.3 Q578,522 605.7,542.7 L579.7,563.1 C576.8,560.4 567.9,552.3 562.2,546.7 C556.6,541.1 551.1,535.3 545.8,529.3 C540.5,523.3 535.3,517.2 530.3,510.9 C525.3,504.6 520.5,498.1 515.8,491.5 C511.1,484.9 504.5,474.6 502.2,471.2 Z M579.7,563.1 L587.5,578.9 M415.8,351.9 L417.8,372.6" fill="none" stroke="#CFE2F3" stroke-width="0.9"/>
<path d="M435.0,210.0 C439.1,209.3 451.6,207.5 459.9,205.8 C468.2,204.1 476.4,202.0 484.7,199.9 C493.0,197.7 501.3,195.2 509.6,192.8 C517.9,190.3 526.2,187.6 534.5,185.0 C542.8,182.3 551.1,179.5 559.3,176.8 C567.6,174.1 575.9,171.4 584.2,168.7 C592.5,166.1 600.8,163.4 609.1,160.9 C617.4,158.3 625.7,155.8 634.0,153.4 C642.2,150.9 650.5,148.6 658.8,146.3 C667.1,144.0 675.4,141.9 683.7,139.7 C692.0,137.6 700.3,135.5 708.6,133.4 C716.9,131.4 725.1,129.4 733.4,127.3 C741.7,125.3 754.2,122.1 758.3,121.1 C758.8,124.9 760.1,134.4 761.4,143.9 C762.7,153.4 764.3,166.5 766.1,177.8 C767.9,189.1 770.3,200.4 772.2,211.7 C774.1,223.0 775.7,234.3 777.3,245.6 C778.9,256.9 780.5,268.2 781.7,279.5 C782.9,290.8 783.9,302.1 784.7,313.4 C785.6,324.7 786.4,335.4 786.8,347.3 C787.2,359.2 787.5,369.6 787.2,385.0 C786.9,400.4 785.4,420.8 785.2,440.0 C785.0,459.2 785.6,479.5 785.9,500.0 C786.2,520.5 786.6,552.3 786.8,562.8 C782.2,561.9 768.0,559.8 759.2,557.7 C750.4,555.6 742.1,553.0 733.9,550.3 C725.7,547.6 717.9,544.5 710.1,541.3 C702.4,538.1 694.8,534.6 687.4,531.0 C680.0,527.4 672.8,523.4 665.7,519.4 C658.6,515.4 651.6,511.1 644.9,506.7 C638.1,502.3 631.6,497.6 625.2,492.8 C618.8,488.0 612.6,482.9 606.6,477.6 C600.6,472.3 594.7,466.8 589.1,461.0 C583.5,455.2 578.1,449.2 572.8,443.0 C567.5,436.8 562.4,430.4 557.4,423.9 C552.4,417.4 547.6,410.7 542.7,404.0 C537.8,397.3 533.1,390.4 528.1,383.9 C523.1,377.3 518.3,370.8 512.9,364.7 C507.5,358.6 500.6,352.1 495.8,347.6 C491.0,343.1 487.7,340.7 484.2,337.8 C480.7,334.9 477.8,332.6 474.7,330.3 C471.6,328.0 468.0,326.6 465.3,324.2 C462.6,321.8 460.8,319.5 458.5,316.1 C456.2,312.7 453.6,308.2 451.7,303.9 C449.8,299.6 448.0,294.8 446.9,290.3 C445.8,285.8 445.9,281.9 444.9,276.8 C443.8,271.8 442.0,267.5 440.6,260.0 C439.2,252.5 437.4,240.3 436.5,232.0 C435.6,223.7 435.2,213.7 435.0,210.0 Z" fill="url(#blade)"/>
<path d="M435.0,210.0 C439.1,208.6 451.6,204.5 459.9,201.7 C468.2,199.0 476.4,196.3 484.7,193.6 C493.0,190.9 501.3,188.2 509.6,185.6 C517.9,182.9 526.2,180.3 534.5,177.7 C542.8,175.0 551.1,172.4 559.3,169.9 C567.6,167.3 575.9,164.7 584.2,162.2 C592.5,159.7 600.8,157.2 609.1,154.7 C617.4,152.3 625.7,149.9 634.0,147.6 C642.2,145.2 650.5,143.0 658.8,140.8 C667.1,138.6 675.4,136.5 683.7,134.6 C692.0,132.6 700.3,130.8 708.6,129.1 C716.9,127.4 725.1,125.9 733.4,124.5 C741.7,123.2 754.2,121.7 758.3,121.1 C754.2,122.1 741.7,125.3 733.4,127.3 C725.1,129.4 716.9,131.4 708.6,133.4 C700.3,135.5 692.0,137.6 683.7,139.7 C675.4,141.9 667.1,144.0 658.8,146.3 C650.5,148.6 642.2,150.9 634.0,153.4 C625.7,155.8 617.4,158.3 609.1,160.9 C600.8,163.4 592.5,166.1 584.2,168.7 C575.9,171.4 567.6,174.1 559.3,176.8 C551.1,179.5 542.8,182.3 534.5,185.0 C526.2,187.6 517.9,190.3 509.6,192.8 C501.3,195.2 493.0,197.7 484.7,199.9 C476.4,202.0 468.2,204.1 459.9,205.8 C451.6,207.5 439.1,209.3 435.0,210.0 Z" fill="#B0201C"/>
<path d="M435.0,210.0 C439.1,208.6 451.6,204.5 459.9,201.7 C468.2,199.0 476.4,196.3 484.7,193.6 C493.0,190.9 501.3,188.2 509.6,185.6 C517.9,182.9 526.2,180.3 534.5,177.7 C542.8,175.0 551.1,172.4 559.3,169.9 C567.6,167.3 575.9,164.7 584.2,162.2 C592.5,159.7 600.8,157.2 609.1,154.7 C617.4,152.3 625.7,149.9 634.0,147.6 C642.2,145.2 650.5,143.0 658.8,140.8 C667.1,138.6 675.4,136.5 683.7,134.6 C692.0,132.6 700.3,130.8 708.6,129.1 C716.9,127.4 725.1,125.9 733.4,124.5 C741.7,123.2 754.2,121.7 758.3,121.1 " fill="none" stroke="#E4E4EC" stroke-width="0.9"/>
<path d="M435.0,210.0 C439.1,209.3 451.6,207.5 459.9,205.8 C468.2,204.1 476.4,202.0 484.7,199.9 C493.0,197.7 501.3,195.2 509.6,192.8 C517.9,190.3 526.2,187.6 534.5,185.0 C542.8,182.3 551.1,179.5 559.3,176.8 C567.6,174.1 575.9,171.4 584.2,168.7 C592.5,166.1 600.8,163.4 609.1,160.9 C617.4,158.3 625.7,155.8 634.0,153.4 C642.2,150.9 650.5,148.6 658.8,146.3 C667.1,144.0 675.4,141.9 683.7,139.7 C692.0,137.6 700.3,135.5 708.6,133.4 C716.9,131.4 725.1,129.4 733.4,127.3 C741.7,125.3 754.2,122.1 758.3,121.1 C758.8,124.9 760.1,134.4 761.4,143.9 C762.7,153.4 764.3,166.5 766.1,177.8 C767.9,189.1 770.3,200.4 772.2,211.7 C774.1,223.0 775.7,234.3 777.3,245.6 C778.9,256.9 780.5,268.2 781.7,279.5 C782.9,290.8 783.9,302.1 784.7,313.4 C785.6,324.7 786.4,335.4 786.8,347.3 C787.2,359.2 787.5,369.6 787.2,385.0 C786.9,400.4 785.4,420.8 785.2,440.0 C785.0,459.2 785.6,479.5 785.9,500.0 C786.2,520.5 786.6,552.3 786.8,562.8 " fill="none" stroke="#D6D6E2" stroke-width="1"/>
<path d="M786.8,562.8 C782.2,561.9 768.0,559.8 759.2,557.7 C750.4,555.6 742.1,553.0 733.9,550.3 C725.7,547.6 717.9,544.5 710.1,541.3 C702.4,538.1 694.8,534.6 687.4,531.0 C680.0,527.4 672.8,523.4 665.7,519.4 C658.6,515.4 651.6,511.1 644.9,506.7 C638.1,502.3 631.6,497.6 625.2,492.8 C618.8,488.0 612.6,482.9 606.6,477.6 C600.6,472.3 594.7,466.8 589.1,461.0 C583.5,455.2 578.1,449.2 572.8,443.0 C567.5,436.8 562.4,430.4 557.4,423.9 C552.4,417.4 547.6,410.7 542.7,404.0 C537.8,397.3 533.1,390.4 528.1,383.9 C523.1,377.3 518.3,370.8 512.9,364.7 C507.5,358.6 500.6,352.1 495.8,347.6 C491.0,343.1 487.7,340.7 484.2,337.8 C480.7,334.9 477.8,332.6 474.7,330.3 C471.6,328.0 468.0,326.6 465.3,324.2 C462.6,321.8 460.8,319.5 458.5,316.1 C456.2,312.7 453.6,308.2 451.7,303.9 C449.8,299.6 448.0,294.8 446.9,290.3 C445.8,285.8 445.9,281.9 444.9,276.8 C443.8,271.8 442.0,267.5 440.6,260.0 C439.2,252.5 437.4,240.3 436.5,232.0 C435.6,223.7 435.2,213.7 435.0,210.0 " fill="none" stroke="#D6D6E2" stroke-width="0.9"/>
<path d="M563.4,163 V177 M560,170 H568" stroke="#6A7FE0" stroke-width="0.8"/>
<path d="M621.5,265.5 H637.5 L640.7,274.5 L637.5,283.2 H621.5 Z" fill="#6666FF" stroke="#05051a" stroke-width="1.1"/>
<path d="M455.1,269.8 C440,262 428,250.1 412.8,250.1 A19.8,19.8 0 1 0 412.8,289.7 C428,289.7 440,278 455.1,269.8 Z" fill="#F9A80C"/>
<path d="M606,158.3 C608,140 610,128 613.2,121 A19.3,19.3 0 1 1 642,141 C630,148 618,153 606,158.3 Z" fill="#F9A80C"/>
<text x="417.4" y="277.9" font-family="Liberation Sans, sans-serif" font-size="22" text-anchor="middle" fill="#000">A</text>
<text x="628.8" y="136.7" font-family="Liberation Sans, sans-serif" font-size="21.5" text-anchor="middle" fill="#000">B</text>
<rect x="342" y="90.5" width="15" height="15" rx="1.5" fill="#6868FF" stroke="#15153a" stroke-width="1.1"/>
</svg>
<span class="t" style="left:341.5px;top:45.0px;line-height:16px;font-size:12px;color:#000;letter-spacing:0.037px;font-weight:bold;">Sweep Method 2</span>
<span class="t" style="left:341.5px;top:60.0px;line-height:16px;font-size:11.5px;color:#000;letter-spacing:-0.005px;">3/28/2023 5:42 PM</span>
<span class="t" style="left:363.5px;top:90.0px;line-height:16px;font-size:11.5px;color:#000;letter-spacing:0.061px;">Sweep Method 2</span>
<div class="a" style="left:329px;top:701px;width:560px;height:1px;background:#EEF1FA;"></div>
</body></html>
